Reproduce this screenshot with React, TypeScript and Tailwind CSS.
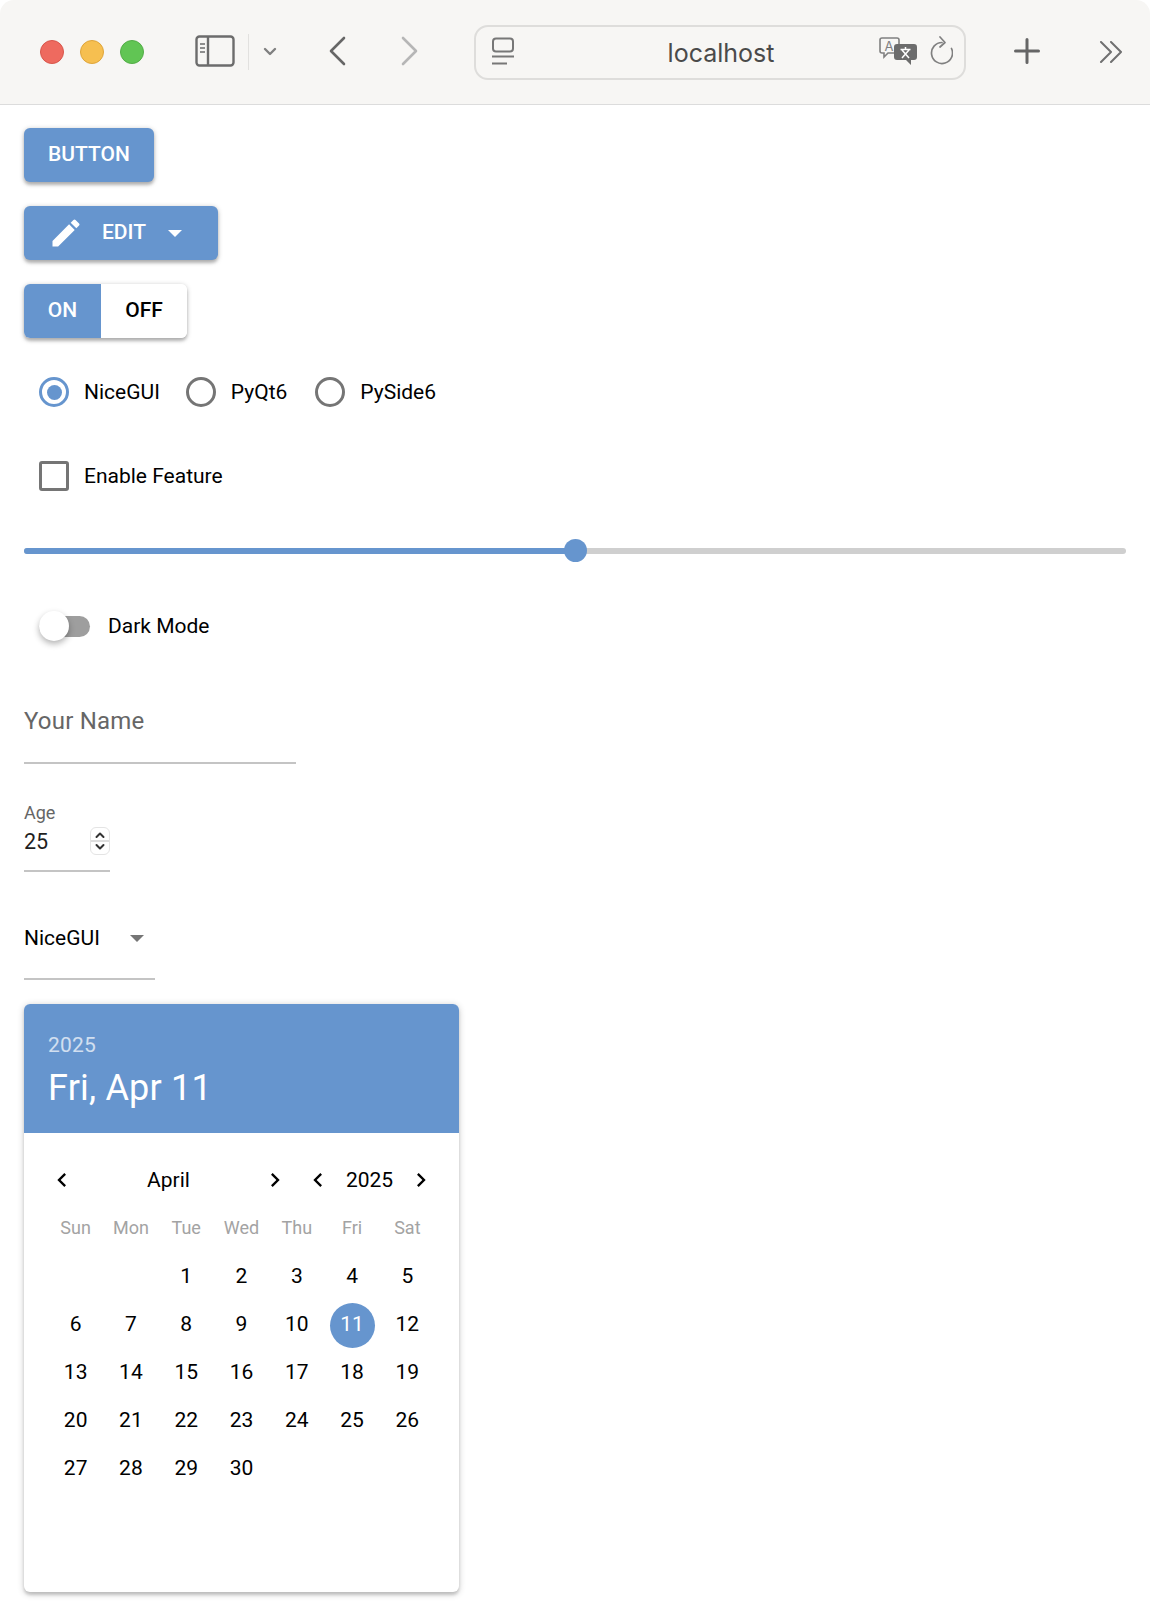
const blue = "bg-[#6695ce]";

const weeks = [
  ["", "", 1, 2, 3, 4, 5],
  [6, 7, 8, 9, 10, 11, 12],
  [13, 14, 15, 16, 17, 18, 19],
  [20, 21, 22, 23, 24, 25, 26],
  [27, 28, 29, 30, "", "", ""],
];

const days = ["Sun", "Mon", "Tue", "Wed", "Thu", "Fri", "Sat"];

const ChevronLeft = () => (
  <svg className="mt-[-2px]" width="28" height="28" viewBox="0 0 24 24" fill="#000">
    <path d="M15.410 7.410L14 6l-6 6 6 6 1.410-1.410L10.830 12z" />
  </svg>
);

const ChevronRight = () => (
  <svg className="mt-[-2px]" width="28" height="28" viewBox="0 0 24 24" fill="#000">
    <path d="M8.590 16.590L13.170 12 8.590 7.410 10 6l6 6-6 6z" />
  </svg>
);

const Toolbar = () => (
  <div className="h-[105px] bg-[#f7f6f4] border-b border-[#dcdcdc] rounded-t-[14px] flex items-center relative">
    <div className="flex gap-[16px] ml-[40px] mt-[-1px]">
      <div className="w-[24px] h-[24px] rounded-full bg-[#ee6a5f] border border-[#d8564b]" />
      <div className="w-[24px] h-[24px] rounded-full bg-[#f6bf50] border border-[#dfa53a]" />
      <div className="w-[24px] h-[24px] rounded-full bg-[#61c554] border border-[#53ad47]" />
    </div>
    <svg className="ml-[51px] mt-[-2px]" width="42" height="32" viewBox="0 0 42 32" fill="none" stroke="#6c6c6c" strokeWidth="2.4">
      <rect x="1.500" y="1.500" width="37" height="29" rx="3" />
      <path d="M13 1.500v29" />
      <path d="M5 9h5M5 13h5M5 17h5" strokeWidth="1.6" />
    </svg>
    <div className="w-[1px] h-[36px] bg-[#e2e1df] ml-[11px]" />
    <svg className="ml-[14px]" width="14" height="10" viewBox="0 0 14 10" fill="none" stroke="#808080" strokeWidth="2.4" strokeLinecap="round" strokeLinejoin="round">
      <path d="M2 2l5 5 5-5" />
    </svg>
    <svg className="ml-[52px] mt-[-2px]" width="18" height="30" viewBox="0 0 18 30" fill="none" stroke="#666" strokeWidth="2.6" strokeLinecap="round" strokeLinejoin="round">
      <path d="M15 2L2 15l13 13" />
    </svg>
    <svg className="ml-[53px] mt-[-2px]" width="18" height="30" viewBox="0 0 18 30" fill="none" stroke="#b6b6b6" strokeWidth="2.6" strokeLinecap="round" strokeLinejoin="round">
      <path d="M3 2l13 13L3 28" />
    </svg>
    <div className="ml-[56px] w-[492px] h-[55px] rounded-[14px] border-2 border-[#dedddb] flex items-center relative">
      <svg className="ml-[15px]" width="24" height="30" viewBox="0 0 24 30" fill="none" stroke="#777" strokeWidth="2">
        <rect x="2" y="1.500" width="20" height="13" rx="3" />
        <path d="M1 19.500h22" />
        <path d="M1 26.500h15" />
      </svg>
      <div className="flex-1 text-center text-[25px] text-[#4a4a4a] font-['Inter'] ml-[48px] pt-[4px]">localhost</div>
      <svg className="mt-[-2px]" width="38" height="28" viewBox="0 0 38 28">
        <path d="M3 1h15a2 2 0 012 2v11a2 2 0 01-2 2H9l-4 4v-4H3a2 2 0 01-2-2V3a2 2 0 012-2z" fill="none" stroke="#808080" strokeWidth="1.6" />
        <text x="5.500" y="13.500" fontSize="13" fill="#808080" fontFamily="Inter">A</text>
        <path d="M18 7h17a3 3 0 013 3v10a3 3 0 01-3 3h-3v5l-5-5h-9a3 3 0 01-3-3V10a3 3 0 013-3z" fill="#6c6c6c" />
        <path d="M21.500 12.500h10M26.500 10v2.500M23 21l7-8M23 13l7 8" stroke="#fff" strokeWidth="1.5" fill="none" />
      </svg>
      <svg className="ml-[12px] mr-[11px] mt-[-2px]" width="24" height="30" viewBox="0 0 24 30" fill="none" stroke="#808080" strokeWidth="1.7" strokeLinecap="round" strokeLinejoin="round">
        <path d="M13 6.500a10.500 10.500 0 1 0 9.500 6" />
        <path d="M11 1l5 5.500-5 4.500" />
      </svg>
    </div>
    <svg className="ml-[48px] mt-[-2px]" width="26" height="26" viewBox="0 0 26 26" fill="none" stroke="#666" strokeWidth="3" strokeLinecap="round">
      <path d="M13 1.500v23M1.500 13h23" />
    </svg>
    <svg className="ml-[59px]" width="24" height="22" viewBox="0 0 24 22" fill="none" stroke="#707070" strokeWidth="2" strokeLinecap="round" strokeLinejoin="round">
      <path d="M2 1l10 10L2 21M12 1l10 10-10 10" />
    </svg>
  </div>
);

const Radio = ({ label, checked, gap }: { label: string; checked?: boolean; gap: string }) => (
  <div className="flex items-center h-[60px]">
    <div className="w-[60px] h-[60px] flex items-center justify-center">
      <div className={`w-[30px] h-[30px] rounded-full border-[3px] flex items-center justify-center ${checked ? "border-[#6695ce]" : "border-[#757575]"}`}>
        {checked && <div className={`w-[15px] h-[15px] rounded-full ${blue}`} />}
      </div>
    </div>
    <span className={`text-[21px] leading-[30px] ${gap}`}>{label}</span>
  </div>
);

const Underlined = ({ className, children }: { className: string; children: React.ReactNode }) => (
  <div className={`h-[84px] border-b-2 border-[#c4c4c4] ${className}`}>{children}</div>
);

const DatePicker = () => (
  <div className="w-[435px] h-[588px] rounded-[6px] bg-white shadow-[0_1.5px_7px_rgba(0,0,0,0.2),0_3px_3px_rgba(0,0,0,0.14)] overflow-hidden">
    <div className={`${blue} h-[129px] px-[24px] pt-[25px] text-white`}>
      <div className="text-[21px] leading-[33px] opacity-70 tracking-[0.2px]">2025</div>
      <div className="text-[36px] leading-[48px] mt-[2px] tracking-[0.2px]">Fri, Apr 11</div>
    </div>
    <div className="px-[24px] pt-[24px]">
      <div className="flex items-center h-[48px] gap-[15px]">
        <div className="flex items-center w-[241px] justify-between">
          <ChevronLeft />
          <span className="text-[21px]">April</span>
          <ChevronRight />
        </div>
        <div className="flex items-center w-[131px] justify-between">
          <ChevronLeft />
          <span className="text-[21px]">2025</span>
          <ChevronRight />
        </div>
      </div>
      <div className="grid grid-cols-7 w-[387px]">
        {days.map((d) => (
          <div key={d} className="h-[48px] pb-[4px] flex items-center justify-center text-[18px] text-[#a3a3a3]">{d}</div>
        ))}
      </div>
      <div className="grid grid-cols-7 w-[387px]">
        {weeks.flat().map((n, i) => (
          <div key={i} className="h-[48px] flex items-center justify-center text-[21px] text-black">
            {n === 11 ? (
              <div className={`w-[45px] h-[45px] rounded-full ${blue} text-white flex items-center justify-center`}>11</div>
            ) : (
              n
            )}
          </div>
        ))}
      </div>
    </div>
  </div>
);

export default function App() {
  return (
    <div className="w-[1150px] h-[1620px] bg-white font-['Roboto',sans-serif] text-[#000] overflow-hidden">
      <Toolbar />
      <div className="px-[24px] pt-[23px] flex flex-col items-start gap-[24px]">
        <div className={`${blue} h-[54px] w-[130px] rounded-[6px] text-white text-[21px] font-medium flex items-center justify-center shadow-[0_1.5px_5px_rgba(0,0,0,0.25),0_3px_3px_rgba(0,0,0,0.15)]`}>
          BUTTON
        </div>
        <div className={`${blue} h-[54px] w-[194px] rounded-[6px] text-white text-[21px] font-medium flex items-center shadow-[0_1.5px_5px_rgba(0,0,0,0.25),0_3px_3px_rgba(0,0,0,0.15)]`}>
          <svg className="ml-[24px]" width="36" height="36" viewBox="0 0 24 24" fill="#fff">
            <path d="M3 17.250V21h3.750L17.810 9.940l-3.750-3.750L3 17.250zM20.710 7.040a1 1 0 000-1.410l-2.340-2.340a1 1 0 00-1.410 0l-1.830 1.830 3.750 3.750 1.830-1.830z" />
          </svg>
          <span className="ml-[18px]">EDIT</span>
          <div className="ml-[22px] w-0 h-0 border-l-[7.500px] border-r-[7.500px] border-t-[7.500px] border-l-transparent border-r-transparent border-t-white" />
        </div>
        <div className="h-[54px] w-[163px] rounded-[6px] flex overflow-hidden text-[21px] font-medium shadow-[0_1.5px_5px_rgba(0,0,0,0.25),0_3px_3px_rgba(0,0,0,0.15)]">
          <div className={`${blue} w-[77px] text-white flex items-center justify-center`}>ON</div>
          <div className="flex-1 bg-white flex items-center justify-center">OFF</div>
        </div>
        <div className="flex h-[60px]">
          <Radio label="NiceGUI" checked gap="pr-[11px]" />
          <Radio label="PyQt6" gap="pr-[13px]" />
          <Radio label="PySide6" gap="pr-[12px]" />
        </div>
        <div className="flex items-center h-[60px]">
          <div className="w-[60px] h-[60px] flex items-center justify-center">
            <div className="w-[30px] h-[30px] rounded-[3px] border-[3px] border-[#757575]" />
          </div>
          <span className="text-[21px] pt-[2px]">Enable Feature</span>
        </div>
        <div className="w-[1102px] h-[42px] flex items-center relative">
          <div className="w-full h-[6px] rounded-full bg-[#cfcfcf]" />
          <div className={`absolute left-0 top-[18px] w-[552px] h-[6px] rounded-full ${blue}`} />
          <div className={`absolute left-[540px] top-[9px] w-[23px] h-[23px] rounded-full ${blue}`} />
        </div>
        <div className="flex items-center h-[60px]">
          <div className="relative w-[84px] h-[60px]">
            <div className="absolute left-[15px] top-[20px] w-[51px] h-[21px] rounded-full bg-[#9e9e9e]" />
            <div className="absolute left-[15px] top-[15px] w-[30px] h-[30px] rounded-full bg-white shadow-[0_3px_6px_rgba(0,0,0,0.3)]" />
          </div>
          <span className="text-[21px] pt-[2px]">Dark Mode</span>
        </div>
        <Underlined className="w-[272px]">
          <div className="pt-[23px] text-[24px] leading-[36px] text-[#666] tracking-[0.2px]">Your Name</div>
        </Underlined>
        <Underlined className="w-[86px]">
          <div className="pt-[12px] text-[18px] leading-[25px] text-[#666]">Age</div>
          <div className="flex items-center justify-between text-[21.500px] leading-[30px]">
            <span className="text-[#1f1f1f] pt-[2px]">25</span>
            <div className="w-[20px] h-[28px] rounded-[6px] border border-[#e4e4e4] overflow-hidden">
              <svg width="18" height="26" viewBox="0 0 18 26" fill="none" stroke="#333" strokeWidth="2" strokeLinecap="round" strokeLinejoin="round">
                <path d="M0 13h18" stroke="#dedede" strokeWidth="2" />
                <path d="M5.500 9L9 5.500 12.500 9M5.500 17L9 20.500 12.500 17" />
              </svg>
            </div>
          </div>
        </Underlined>
        <Underlined className="w-[131px]">
          <div className="pt-[24px] flex items-center text-[21px] leading-[36px]">
            <span>NiceGUI</span>
            <div className="ml-[30px] w-0 h-0 border-l-[7.500px] border-r-[7.500px] border-t-[7.500px] border-l-transparent border-r-transparent border-t-[#757575]" />
          </div>
        </Underlined>
        <DatePicker />
      </div>
    </div>
  );
}
